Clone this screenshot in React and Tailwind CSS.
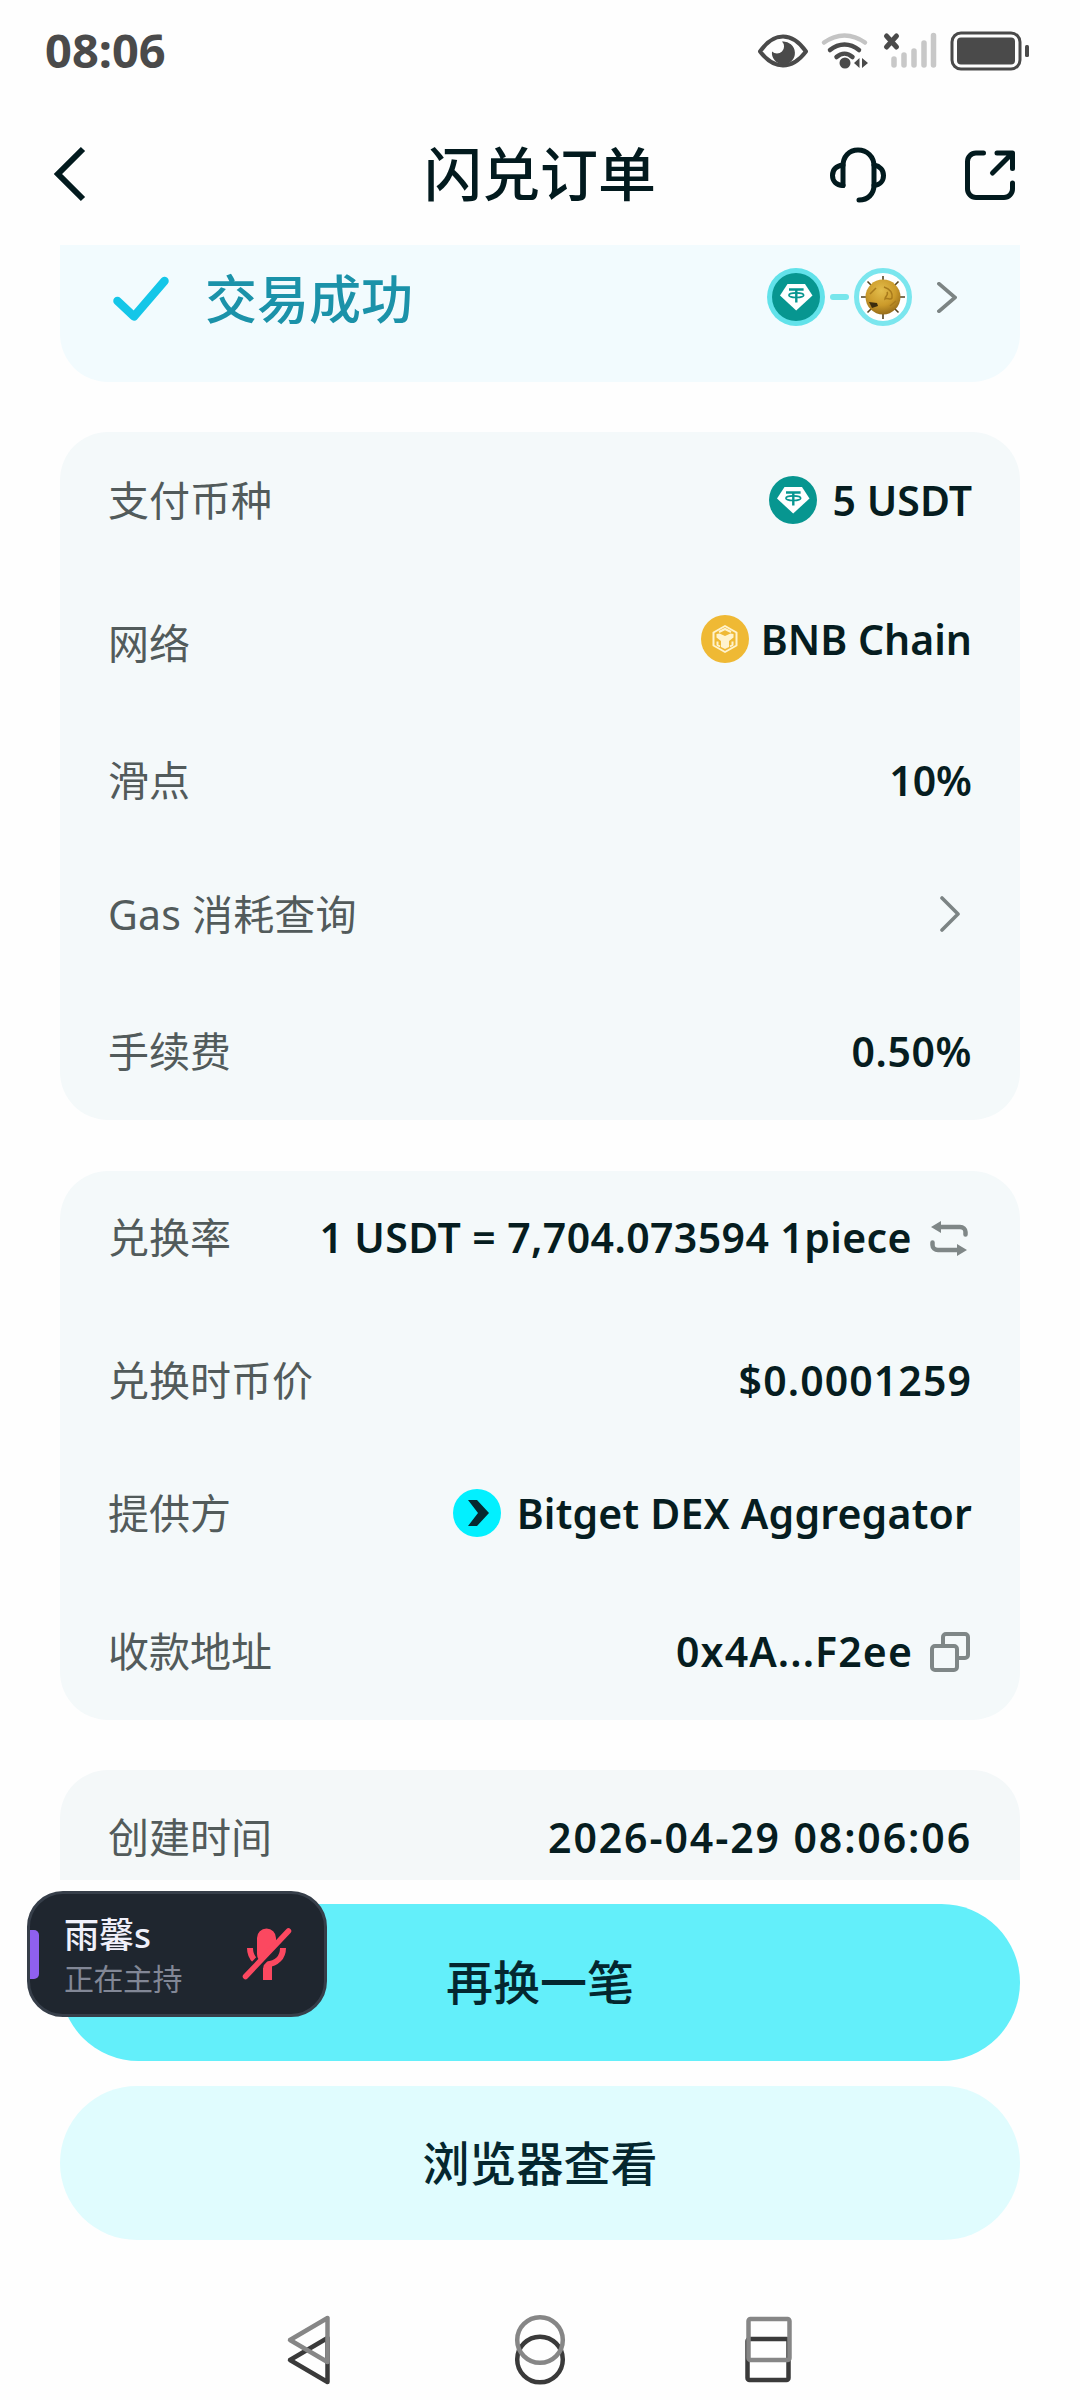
function UsdtIcon({ className }) {
      return (
            <svg viewBox="0 0 48 48" className={className}>
                  <circle cx="24" cy="24" r="24" fill="#079690"/>
                  <path d="M15.5 11h17.5l7.5 11.5L24.2 37.5 8 22.5z" fill="#fff"/>
                  <path d="M17 16.5h14.6M24.3 17v12.5" stroke="#079690" strokeWidth="2.4" fill="none"/>
                  <ellipse cx="24.3" cy="22.2" rx="7.4" ry="2.3" stroke="#079690" strokeWidth="1.6" fill="none"/>
            </svg>
      );
}

function BnbIcon() {
      return (
            <svg viewBox="0 0 48 48" className="size-12">
                  <circle cx="24" cy="24" r="24" fill="#efb934"/>
                  <g fill="none" stroke="#fff3cc" strokeWidth="2" strokeLinejoin="round">
                        <path d="M24 11l11.5 6.500v13L24 37l-11.500-6.500v-13z"/>
                        <path d="M18 17l6-3 6 3"/>
                        <path d="M16.500 26.500v3.500l2.500 1.500M31.500 26.500v3.500l-2.500 1.500"/>
                  </g>
                  <path d="M15.500 19l3-.5 5.500 2.500 5.500-2.500 3 .5v3.500L28 26v6L24 34l-4-2V26l-4.500-3.500z" fill="#fff3cc"/>
            </svg>
      );
}

function PieceCoin() {
      return (
            <svg viewBox="0 0 58 58" className="size-[58px]">
                  <defs>
                        <radialGradient id="gold" cx="45%" cy="32%" r="70%">
                              <stop offset="0" stopColor="#e3bd4c"/>
                              <stop offset="0.6" stopColor="#cb9a2a"/>
                              <stop offset="1" stopColor="#946a18"/>
                        </radialGradient>
                  </defs>
                  <circle cx="29" cy="29" r="26.5" fill="#fff" stroke="#7be6ee" strokeWidth="5"/>
                  <path d="M29 8v5M29 45v6M7 29h5M46 29h5M13.5 13.5l4 4M44.5 13.5l-4 4M13.5 44.5l4-4M44.5 44.5l-4-4" stroke="#54431f" strokeWidth="1.6"/>
                  <circle cx="29" cy="29" r="17.5" fill="url(#gold)"/>
                  <path d="M30 19c6 2 9 5 8 11-2 3-4-1-7 1 0-3 4-4 2-7M36 38l6-5M22 20l-6 6" stroke="#a87a1c" strokeWidth="1.5" fill="none"/>
                  <path d="M15 34l8 1 1 3-6 2z" fill="#3b2c0e"/>
            </svg>
      );
}

function BitgetIcon() {
      return (
            <svg viewBox="0 0 48 48" className="size-12">
                  <circle cx="24" cy="24" r="24" fill="#02f0ff"/>
                  <path d="M15 11h9l12 13-12 13h-9l10-13z" fill="#062830"/>
            </svg>
      );
}

function Chevron({ className, w = 4 }) {
      return (
            <svg viewBox="0 0 20 36" preserveAspectRatio="none" className={className} fill="none" stroke="#7c8484" strokeWidth={w} strokeLinecap="round" strokeLinejoin="round">
                  <path d="M2 2l16 16L2 34"/>
            </svg>
      );
}

function SwapIcon() {
      return (
            <svg viewBox="0 0 38 38" className="mr-1 ml-[18px] mt-0.5 size-[38px]" fill="none" stroke="#7f8787" strokeWidth="4.5" strokeLinecap="round">
                  <path d="M8 8h22c3 0 5.500 2 5.500 5v2.500M30 31H8c-3 0-5.500-2-5.500-5v-2.500"/>
                  <path d="M11 2v12L1 8zM27 25v12l10-6z" fill="#7f8787" stroke="none"/>
            </svg>
      );
}

function CopyIcon() {
      return (
            <svg viewBox="0 0 40 40" className="mt-0.5 mr-0.5 ml-[17px] size-10" fill="none" stroke="#7f8787" strokeWidth="4">
                  <rect x="2" y="14" width="25" height="24" rx="3"/>
                  <path d="M13 14V5a3 3 0 0 1 3-3h19a3 3 0 0 1 3 3v18a3 3 0 0 1-3 3h-8"/>
            </svg>
      );
}

function StatusBar() {
      return (
            <div className="flex h-[102px] items-center justify-between pr-[51px] pl-[45px]">
                  <span className="pb-0.5 text-[47px] leading-none font-bold text-[#4a4a4a]">08:06</span>
                  <svg viewBox="0 0 272 40" className="h-10 w-[272px]">
                        {/* eye */}
                        <path d="M3 20.500C11 9 18 5.500 26 5.500S41 9 49 20.500C41 31 34 34.500 26 34.500S11 31 3 20.500z" fill="none" stroke="#4a4a4a" strokeWidth="4" strokeLinejoin="round"/>
                        <path d="M25 10.500a11.500 11.500 0 1 1-10 10 6.500 6.500 0 0 0 10-10z" fill="#4a4a4a"/>
                        {/* wifi */}
                        <g fill="none" strokeWidth="4.5" strokeLinecap="round">
                              <path d="M67 11.500c13-9.500 28-9.500 41 0" stroke="#c4c4c4"/>
                              <path d="M73 19c9-7.500 20-7.500 29 0M79.500 26c5-4.500 11-4.500 16 0" stroke="#4a4a4a"/>
                        </g>
                        <circle cx="88" cy="32" r="5.5" fill="#4a4a4a"/>
                        <path d="M97 32l5.500-5v10zM111 32l-6-5v10z" fill="#4a4a4a"/>
                        {/* no signal */}
                        <path d="M129.500 5l10 11M139.500 5l-10 11" stroke="#4a4a4a" strokeWidth="5" strokeLinecap="round"/>
                        <path d="M137 28v6M147 24v10M157 20v14M167 12v22M176.500 4.500v29.500" stroke="#c8c8c8" strokeWidth="5.5" strokeLinecap="round"/>
                        {/* battery */}
                        <rect x="195" y="2" width="68" height="36" rx="9" fill="none" stroke="#4a4a4a" strokeWidth="3"/>
                        <rect x="200" y="6.5" width="58" height="27" rx="4" fill="#4a4a4a"/>
                        <rect x="268" y="14" width="4" height="12" rx="1.5" fill="#4a4a4a"/>
                  </svg>
            </div>
      );
}

function TitleBar() {
      return (
            <header className="flex h-[143px] items-start justify-between pt-0.5 pr-16 pl-[52px] text-[#021a1e]">
                  <svg viewBox="0 0 34 56" className="mt-[42px] h-14 w-[34px]" fill="none" stroke="currentColor" strokeWidth="6">
                        <path d="M31 3L6 28l25 25"/>
                  </svg>
                  <h1 className="mt-10 ml-[164px] text-[58px] leading-[60px] font-medium">闪兑订单</h1>
                  <div className="mt-[43px] flex gap-[78px]">
                        <svg viewBox="0 0 56 56" className="size-14" fill="none" stroke="currentColor" strokeWidth="5" strokeLinecap="round" strokeLinejoin="round">
                              <path d="M13 38.500V19C13 9.500 19 3 28 3s16 6.500 16 16v19c0 9-6 15-15 15"/>
                              <path d="M13 18C6 19 2.500 23 2.500 28.500S6 38 13 38.500M44 18c6 1 9.500 5 9.500 10.500S50 38 44 38.500"/>
                        </svg>
                        <svg viewBox="0 0 52 52" className="mt-0.5 size-[52px]" fill="none" stroke="currentColor" strokeWidth="5" strokeLinecap="round" strokeLinejoin="round">
                              <path d="M19.500 4H12a8.500 8.500 0 0 0-8.500 8.500V40a8.500 8.500 0 0 0 8.500 8.500h28a8.500 8.500 0 0 0 8.500-8.500v-6"/>
                              <path d="M33 4h15.500v15.500M48 4.500L28.500 24"/>
                        </svg>
                  </div>
            </header>
      );
}

function Row({ label, className, labelClass = "", valueClass = "", children }) {
      return (
            <div className={`flex items-center justify-between pb-0.5 ${className}`}>
                  <span className={`text-[41px] leading-[48px] whitespace-nowrap text-[#525b5b] ${labelClass}`}>{label}</span>
                  <div className={`flex items-center text-[41px] leading-[48px] font-semibold whitespace-nowrap text-[#061d20] ${valueClass}`}>{children}</div>
            </div>
      );
}

function HostBadge() {
      return (
            <div className="absolute top-[1891px] left-[27px] flex h-[126px] w-[300px] items-center rounded-[36px] border-[3px] border-[#363e49] bg-[#1f262f]">
                  <div className="h-[49px] w-[9px] rounded-r-[5px] bg-[#8f60ee]"/>
                  <div className="ml-[25px] flex-1 pt-1.5">
                        <div className="text-[35px] leading-[40px] font-medium text-[#f0f0fa]">雨馨s</div>
                        <div className="mt-1 text-[30px] leading-[40px] tracking-[-0.5px] text-[#828796]">正在主持</div>
                  </div>
                  <svg viewBox="0 0 50 54" className="mr-[32px] h-[54px] w-[50px]">
                        <path d="M8 21c0 6 2 9.500 5 12.500M41 21c0 9-6 15.500-16.500 16.500V53" fill="none" stroke="#fb4860" strokeWidth="6"/>
                        <path d="M3.500 49.500L46.500 4" stroke="#1f262f" strokeWidth="11"/>
                        <path d="M15 11a9.500 9.500 0 0 1 19 0v5L17 33a9 9 0 0 1-2-6z" fill="#fb4860"/>
                        <path d="M3.500 49.500L46.500 4" stroke="#fb4860" strokeWidth="5.5" strokeLinecap="round"/>
                        <path d="M21 53V41l6-5 3 2v15z" fill="#fb4860"/>
                  </svg>
            </div>
      );
}

function NavBar() {
      return (
            <nav className="mt-[73px] flex items-start justify-between pr-[287px] pl-[285px]">
                  {/* each glyph is doubled, the lighter copy sits 20px higher */}
                  <svg viewBox="0 0 46 72" className="h-[72px] w-[46px]" fill="none" strokeWidth="4.5" strokeLinejoin="round">
                        <path d="M42.500 25v44L5 47z" stroke="#3a3a3a"/>
                        <path d="M42.500 5v44L5 27z" stroke="#868686"/>
                  </svg>
                  <svg viewBox="0 0 52 72" className="ml-[3px] h-[72px] w-[52px]" fill="none" strokeWidth="4.5">
                        <circle cx="26" cy="46.5" r="22.8" stroke="#3a3a3a"/>
                        <circle cx="26" cy="27" r="22.8" stroke="#868686"/>
                  </svg>
                  <svg viewBox="0 0 48 72" className="h-[72px] w-[48px]" fill="none" strokeWidth="4.5">
                        <rect x="2.5" y="26" width="41" height="41" rx="2" stroke="#3a3a3a"/>
                        <rect x="3.5" y="6" width="41" height="41" rx="2" stroke="#868686"/>
                  </svg>
            </nav>
      );
}

export default function App() {
      return (
            <div className="relative h-[2400px] w-[1080px] overflow-hidden bg-[#fefefe] font-['Noto_Sans','Noto_Sans_CJK_SC',sans-serif]">
                  <StatusBar/>
                  <TitleBar/>

                  <main className="flex h-[1635px] flex-col overflow-hidden px-[60px]">
                        <section className="flex h-[137px] shrink-0 items-start rounded-b-[48px] bg-[#f2fbfe] pr-[63px] pl-[53px]">
                              <svg viewBox="0 0 56 46" className="mt-[31px] h-[46px] w-14" fill="none" stroke="#14c6e8" strokeWidth="8.5" strokeLinecap="round" strokeLinejoin="round">
                                    <path d="M4.500 25L21 40.500 51.500 5"/>
                              </svg>
                              <span className="mt-[24px] ml-9 flex-1 text-[52px] leading-[60px] font-medium text-[#1b92a9]">交易成功</span>
                              <div className="mt-[23px] flex items-center">
                                    <div className="size-[58px] rounded-full bg-[#62e2ea] p-[5px]"><UsdtIcon className="size-12"/></div>
                                    <div className="mx-[5px] h-1.5 w-[19px] rounded-full bg-[#78e6ec]"/>
                                    <PieceCoin/>
                                    <Chevron className="ml-[25px] h-[31px] w-5" w={4}/>
                              </div>
                        </section>

                        <section className="mt-[50px] h-[688px] shrink-0 rounded-[48px] bg-[#f4f9fa] pr-[48px] pl-[48px]">
                              <Row label="支付币种" className="h-[137px]">
                                    <UsdtIcon className="mr-4 size-12"/>5 USDT
                              </Row>
                              <Row label="网络" className="h-[141px]" labelClass="pt-2">
                                    <BnbIcon/><span className="ml-3">BNB Chain</span>
                              </Row>
                              <Row label="滑点" className="h-[142px]">10%</Row>
                              <Row label="Gas 消耗查询" className="h-[125px]" labelClass="tracking-[0.2px]">
                                    <Chevron className="mr-3 h-9 w-5" w={3.6}/>
                              </Row>
                              <Row label="手续费" className="h-[149px]" valueClass="tracking-[0.6px]">0.50%</Row>
                        </section>

                        <section className="mt-[51px] h-[549px] shrink-0 rounded-[48px] bg-[#f4f9fa] pr-[48px] pl-[48px]">
                              <Row label="兑换率" className="h-[134px]" valueClass="tracking-[0.4px]">
                                    1 USDT = 7,704.073594 1piece<SwapIcon/>
                              </Row>
                              <Row label="兑换时币价" className="h-[151px]" valueClass="tracking-[1.1px]">$0.0001259</Row>
                              <Row label="提供方" className="h-[115px]" valueClass="tracking-[0.2px]">
                                    <BitgetIcon/><span className="ml-4">Bitget DEX Aggregator</span>
                              </Row>
                              <Row label="收款地址" className="h-[161px]" valueClass="tracking-[1.1px]">
                                    0x4A...F2ee<CopyIcon/>
                              </Row>
                        </section>

                        <section className="mt-[50px] h-[160px] shrink-0 rounded-t-[48px] bg-[#f4f8f9] pr-[48px] pl-[48px]">
                              <Row label="创建时间" className="h-[136px]" valueClass="tracking-[1.9px]">2026-04-29 08:06:06</Row>
                        </section>
                  </main>

                  <footer className="mt-6 flex flex-col gap-[25px] px-[60px]">
                        <button className="h-[157px] rounded-full bg-[#63effa] text-[47px] leading-none font-medium text-[#04272f]">再换一笔</button>
                        <button className="h-[154px] rounded-full bg-[#e0fcfe] text-[47px] leading-none font-medium text-[#04272f]">浏览器查看</button>
                  </footer>

                  <NavBar/>
                  <HostBadge/>
            </div>
      );
}
